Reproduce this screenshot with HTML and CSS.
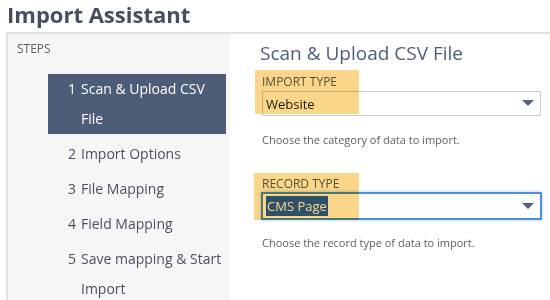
FILE: index.html
```html
<!DOCTYPE html>
<html>
<head>
    <title>Import Assistant</title>
    <link rel="stylesheet" href="styles.css">
</head>
<body>
    <h1>Import Assistant</h1>
    <div class="wizard">
        <!-- Left column with the list of steps -->
        <div class="steps">
            <div class="steps-label">STEPS</div>
            <ul class="step-list">
                <li class="step active"><span class="num">1</span><span class="name">Scan &amp; Upload CSV File</span></li>
                <li class="step"><span class="num">2</span><span class="name">Import Options</span></li>
                <li class="step"><span class="num">3</span><span class="name">File Mapping</span></li>
                <li class="step"><span class="num">4</span><span class="name">Field Mapping</span></li>
                <li class="step"><span class="num">5</span><span class="name">Save mapping &amp; Start Import</span></li>
            </ul>
        </div>

        <!-- Current step -->
        <div class="content">
            <h2>Scan &amp; Upload CSV File</h2>

            <div class="field first">
                <div class="field-label">IMPORT TYPE</div>
                <div class="select"><span class="value">Website</span><span class="arrow"></span></div>
                <div class="help">Choose the category of data to import.</div>
                <div class="mark mark-import"></div>
            </div>

            <div class="field">
                <div class="field-label">RECORD TYPE</div>
                <div class="select focused"><span class="value selected">CMS Page</span><span class="arrow"></span></div>
                <div class="help">Choose the record type of data to import.</div>
                <div class="mark mark-record"></div>
            </div>
        </div>
    </div>
</body>
</html>
```

FILE: styles.css
```css
body {
    margin: 0;
    font-family: 'Open Sans', sans-serif;
    color: #555;
    background-color: #fff;
    overflow: hidden;
}
h1 {
    margin: 0;
    padding: 0 7px;
    height: 32px;
    font-size: 22px;
    line-height: 28px;
    font-weight: bold;
    color: #454f60;
}
.wizard {
    display: flex;
    height: 268px;
    margin-left: 6px;
    border-top: 2px solid #e2e2e2;
    border-left: 2px solid #e2e2e2;
}

/* Steps column */
.steps {
    width: 222px;
    background-color: #f6f6f6;
    flex-shrink: 0;
}
.steps-label {
    padding: 7px 0 0 9px;
    font-size: 12px;
    line-height: 16px;
    color: #5a5f66;
}
.step-list {
    list-style: none;
    margin: 17px 0 0 40px;
    padding: 0;
    width: 178px;
}
.step {
    display: flex;
    padding-left: 20px;
    margin-bottom: 5px;
    font-size: 14px;
    line-height: 30px;
    color: #4a5060;
}
.step .num {
    width: 13px;
    flex-shrink: 0;
}
.step.active {
    background-color: #4e5d77;
    color: #fff;
}

/* Step content */
.content {
    flex: 1;
    padding: 6px 0 0 25px;
}
h2 {
    margin: 0 0 8px 5px;
    font-size: 19px;
    line-height: 26px;
    font-weight: normal;
    color: #4e5d77;
}
.field {
    position: relative;
    margin-left: 7px;
    width: 279px;
}
.field + .field {
    margin-top: 28px;
}
.field-label {
    font-size: 12px;
    line-height: 15px;
    margin-bottom: 1.5px;
    color: #5a5f66;
}
.select {
    display: flex;
    align-items: center;
    justify-content: space-between;
    height: 23px;
    padding: 0 6px 0 3px;
    border: 1px solid #ccc;
    font-size: 13px;
    color: #222;
}
.select .value {
    padding-top: 1px;
}
.select.focused {
    height: 24px;
    border: 1px solid #4a8fd8;
    box-shadow: 0 0 0 1px #4a8fd8, 0 0 3px 1px rgba(74, 143, 216, 0.5);
    margin-top: 2px;
}
.value.selected {
    background-color: #2f5fc0;
    color: #fff;
    padding: 0 1px;
    line-height: 20px;
}
.arrow {
    width: 0;
    height: 0;
    border-left: 6px solid transparent;
    border-right: 6px solid transparent;
    border-top: 6px solid #4d6180;
}
.help {
    margin-top: 16px;
    font-size: 11px;
    line-height: 16px;
    color: #5a5f66;
}

/* Yellow highlight marks drawn over the fields */
.mark {
    position: absolute;
    background-color: #fad68a;
    mix-blend-mode: multiply;
}
.mark-import {
    left: -7px;
    top: -4px;
    width: 104px;
    height: 44px;
}
.mark-record {
    left: -8px;
    top: -3px;
    width: 105px;
    height: 47px;
}
```
